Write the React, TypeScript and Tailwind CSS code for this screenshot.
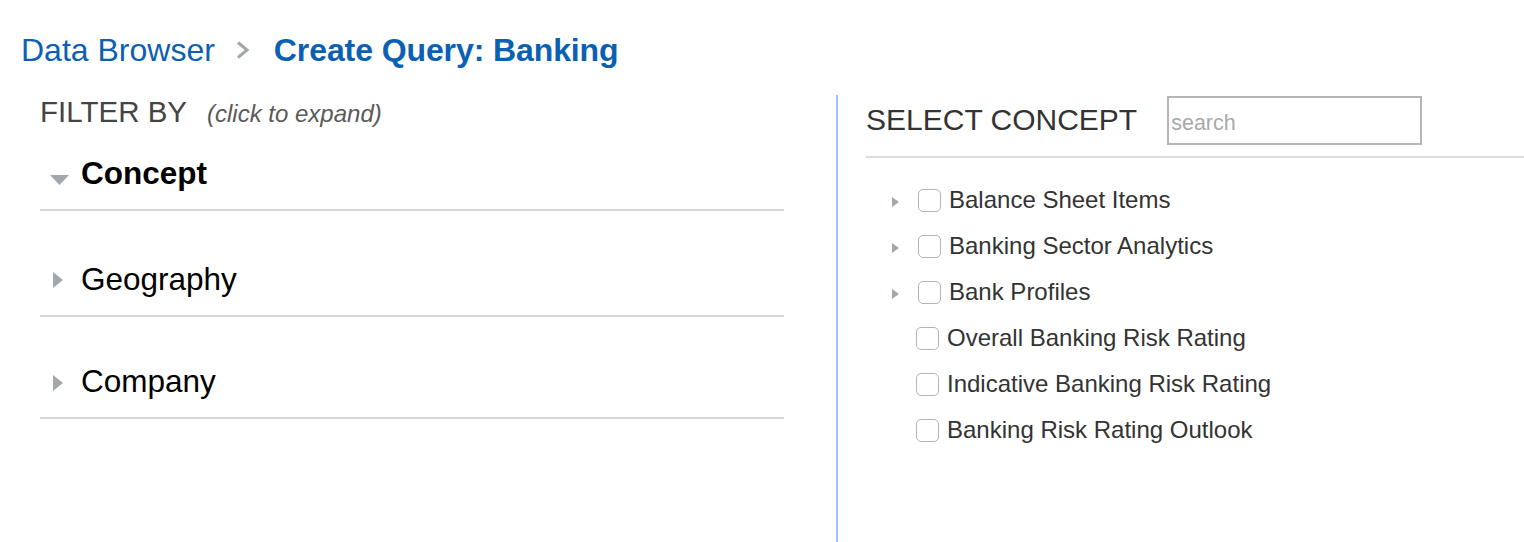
import React from "react";

const font = { fontFamily: '"Liberation Sans", Arial, Helvetica, sans-serif' };

function DownTri() {
  return (
    <svg width="19" height="10" viewBox="0 0 19 10" className="ml-[10px] mt-[18px]">
      <polygon points="0,0 19,0 9.5,10" fill="#a3a8ad" />
    </svg>
  );
}

function RightTri({ top }: { top: number }) {
  return (
    <svg width="10" height="16" viewBox="0 0 10 16" className="ml-[13px]" style={{ marginTop: top }}>
      <polygon points="0,0 10,8 0,16" fill="#a3a8ad" />
    </svg>
  );
}

function SmallTri() {
  return (
    <svg width="7" height="10" viewBox="0 0 7 10" className="ml-[26px] mr-[19px] mt-[4px] shrink-0">
      <polygon points="0,0 7,5 0,10" fill="#a3a8ad" />
    </svg>
  );
}

function Box() {
  return (
    <span className="inline-block w-[23px] h-[23px] shrink-0 rounded-[5px] border border-[#b4b4b4] bg-white" />
  );
}

const items: { label: string; expandable: boolean }[] = [
  { label: "Balance Sheet Items", expandable: true },
  { label: "Banking Sector Analytics", expandable: true },
  { label: "Bank Profiles", expandable: true },
  { label: "Overall Banking Risk Rating", expandable: false },
  { label: "Indicative Banking Risk Rating", expandable: false },
  { label: "Banking Risk Rating Outlook", expandable: false },
];

export default function App() {
  return (
    <div className="w-[1524px] h-[542px] overflow-hidden bg-white flex flex-col" style={font}>
      {/* Breadcrumb */}
      <div className="pt-[34px] pl-[21px] flex items-center h-[66px] shrink-0">
        <span className="text-[32px] leading-[32px] text-[#0c60b3]">Data Browser</span>
        <svg width="14" height="18" viewBox="0 0 14 18" className="ml-[21px] mr-[24px]">
          <polyline points="2,1.5 11,9 2,16.5" fill="none" stroke="#a3a7ab" strokeWidth="3" />
        </svg>
        <span className="text-[32px] leading-[32px] font-bold text-[#0c60b3] tracking-[-0.1px]">Create Query: Banking</span>
      </div>

      {/* Main */}
      <div className="mt-[29px] flex flex-1 min-h-0">
        {/* Left */}
        <div className="w-[836px] shrink-0 pl-[40px] pr-[52px]">
          <div className="pt-[2px] flex items-baseline h-[31px]">
            <span className="text-[29.5px] leading-[29px] text-[#444]">FILTER BY</span>
            <span className="ml-[20px] text-[24px] leading-[29px] italic text-[#5a5a5a]">(click to expand)</span>
          </div>

          <div className="pt-[31px] pb-[20px] border-b-2 border-[#d6d6d6] flex items-start">
            <div className="w-[41px] h-[32px] flex items-start">
              <DownTri />
            </div>
            <span className="text-[31.5px] leading-[32px] font-bold text-black">Concept</span>
          </div>

          <div className="pt-[52px] pb-[20px] border-b-2 border-[#d6d6d6] flex items-start">
            <div className="w-[41px] h-[32px] flex items-start">
              <RightTri top={9} />
            </div>
            <span className="text-[31.5px] leading-[32px] text-black">Geography</span>
          </div>

          <div className="pt-[48px] pb-[20px] border-b-2 border-[#d6d6d6] flex items-start">
            <div className="w-[41px] h-[32px] flex items-start">
              <RightTri top={10} />
            </div>
            <span className="text-[31.5px] leading-[32px] text-black">Company</span>
          </div>
        </div>

        {/* Right */}
        <div className="flex-1 border-l-[2.5px] border-[#9ec3f5] pl-[28px]">
          <div className="pt-[1px] pb-[11px] border-b-2 border-[#dcdcdc]">
            <div className="flex items-center h-[49px]">
              <span className="text-[30px] leading-[30px] text-[#333] -mt-[2px]">SELECT CONCEPT</span>
              <div className="ml-[30px] w-[255px] h-[49px] border-2 border-[#b5b5b5] flex items-center pl-[2px] pt-[5px]">
                <input
                  placeholder="search"
                  className="w-full outline-none text-[21.5px] text-[#333] placeholder:text-[#a9a9a9] bg-transparent"
                  style={font}
                />
              </div>
            </div>
          </div>

          <div className="pt-[19px]">
            {items.map((it) => (
              <div key={it.label} className="h-[46px] flex items-center">
                {it.expandable ? (
                  <>
                    <SmallTri />
                    <Box />
                    <span className="ml-[8px] text-[24px] leading-[24px] text-[#333]">{it.label}</span>
                  </>
                ) : (
                  <>
                    <span className="w-[50px] shrink-0" />
                    <Box />
                    <span className="ml-[8px] text-[24px] leading-[24px] text-[#333]">{it.label}</span>
                  </>
                )}
              </div>
            ))}
          </div>
        </div>
      </div>
    </div>
  );
}
